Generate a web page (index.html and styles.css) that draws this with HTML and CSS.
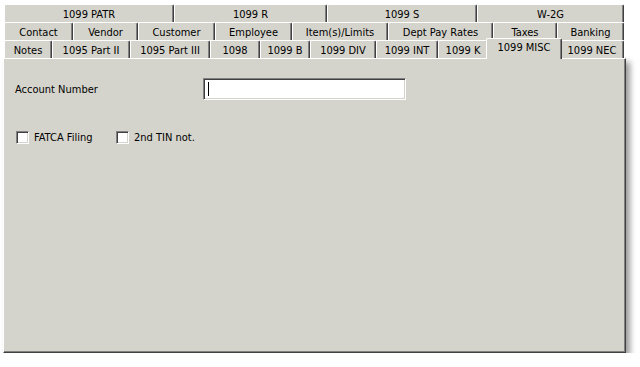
FILE: index.html
```html
<!DOCTYPE html>
<html lang="en">
<head>
  <meta charset="UTF-8" />
  <title>Vendor - 1099 MISC</title>
  <link rel="stylesheet" href="styles.css">
</head>
<body>

  <div class="window">
    <div class="tabstrip" role="tablist">
      <div class="tab-row row-1">
        <div class="tab" role="tab">1099 PATR</div>
        <div class="tab" role="tab">1099 R</div>
        <div class="tab" role="tab">1099 S</div>
        <div class="tab" role="tab">W-2G</div>
      </div>
      <div class="tab-row row-2">
        <div class="tab" role="tab">Contact</div>
        <div class="tab" role="tab">Vendor</div>
        <div class="tab" role="tab">Customer</div>
        <div class="tab" role="tab">Employee</div>
        <div class="tab" role="tab">Item(s)/Limits</div>
        <div class="tab" role="tab">Dept Pay Rates</div>
        <div class="tab" role="tab">Taxes</div>
        <div class="tab" role="tab">Banking</div>
      </div>
      <div class="tab-row row-3">
        <div class="tab" role="tab">Notes</div>
        <div class="tab" role="tab">1095 Part II</div>
        <div class="tab" role="tab">1095 Part III</div>
        <div class="tab" role="tab">1098</div>
        <div class="tab" role="tab">1099 B</div>
        <div class="tab" role="tab">1099 DIV</div>
        <div class="tab" role="tab">1099 INT</div>
        <div class="tab" role="tab">1099 K</div>
        <div class="tab active" role="tab" aria-selected="true">1099 MISC</div>
        <div class="tab" role="tab">1099 NEC</div>
      </div>
    </div>

    <div class="panel" role="tabpanel">
      <div class="field-row">
        <label class="field-label" for="account">Account Number</label>
        <input class="text-box" id="account" type="text" value="">
      </div>
      <div class="check-row">
        <label class="check"><input type="checkbox"> FATCA Filing</label>
        <label class="check"><input type="checkbox"> 2nd TIN not.</label>
      </div>
    </div>
  </div>

</body>
</html>
```

FILE: styles.css
```css
/* Pagina */
body {
  margin: 0;
  background: #fff;
  font-family: "DejaVu Sans Condensed", "DejaVu Sans", sans-serif;
  font-stretch: condensed;
  font-size: 11px;
  color: #000;
}

/* Ventana con sombra */
.window {
  width: 623px;
  margin: 4px 0 0 3px;
}

/* Pestañas */
.tabstrip {
  padding-left: 1px;
}

.tab-row {
  display: grid;
  height: 18px;
}
.row-1 { grid-template-columns: 170px 153px 150px 147px; }
.row-2 { grid-template-columns: 69px 65px 77px 77px 96px 105px 64px 67px; }
.row-3 { grid-template-columns: 48px 78px 80px 50px 50px 66px 62px 50px 72px 64px; }

.tab {
  box-sizing: border-box;
  height: 18px;
  padding-top: 2px;
  background: #d5d4cc;
  border-top: 1px solid #fff;
  border-left: 1px solid #fff;
  border-right: 1px solid #404040;
  box-shadow: inset -1px 0 0 #808080;
  border-radius: 2px 2px 0 0;
  text-align: center;
  line-height: 15px;
  white-space: nowrap;
  overflow: hidden;
}

.tab.active {
  position: relative;
  z-index: 1;
  height: 21px;
  margin: -2px -2px 0 -2px;
  padding-top: 1px;
}

/* Panel de contenido */
.panel {
  box-sizing: border-box;
  height: 295px;
  background: #d5d4cc;
  border-top: 1px solid #fff;
  border-left: 1px solid #fff;
  border-right: 1px solid #404040;
  border-bottom: 1px solid #404040;
  box-shadow: inset -1px -1px 0 #808080, 4px 4px 6px rgba(0,0,0,0.4);
  padding: 19px 0 0 11px;
}

.field-row {
  display: flex;
  align-items: center;
}

.field-label {
  width: 188px;
}

.text-box {
  box-sizing: border-box;
  width: 203px;
  height: 22px;
  margin: 0;
  padding: 0;
  border: 1px solid;
  border-color: #808080 #fff #fff #808080;
  box-shadow: inset 1px 1px 0 #404040, inset -1px -1px 0 #d5d4cc;
  background: #fff linear-gradient(#000, #000) no-repeat 4px 3px / 1px 14px;
  outline: none;
}

/* Casillas */
.check-row {
  display: flex;
  margin-top: 31px;
  padding-left: 1px;
}

.check {
  display: flex;
  align-items: center;
  gap: 5px;
  width: 100px;
}

.check input {
  appearance: none;
  box-sizing: border-box;
  width: 13px;
  height: 13px;
  margin: 0;
  background: #fff;
  border: 1px solid;
  border-color: #808080 #fff #fff #808080;
  box-shadow: inset 1px 1px 0 #404040, inset -1px -1px 0 #d5d4cc;
}
```
